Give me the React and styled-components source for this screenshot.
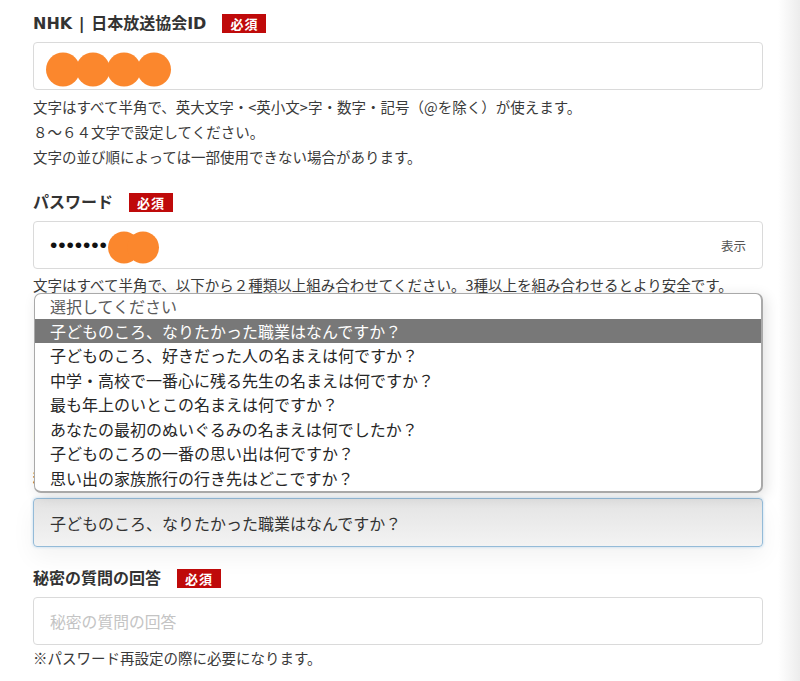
import React from "react";
import styled, { createGlobalStyle } from "styled-components";

const Global = createGlobalStyle`
  html, body { margin: 0; padding: 0; height: 100%; overflow: hidden; background: #fff; }
  body { font-family: "Noto Sans CJK JP", "Noto Sans", sans-serif; color: #333; }
  * { box-sizing: border-box; }
`;

const Page = styled.div`
  display: flex;
  min-height: 681px;
`;

const Main = styled.main`
  width: 778px;
  padding: 13.5px 15px 0 33px;
`;

const Gutter = styled.div`
  flex: 1;
  background: linear-gradient(to right, #ffffff, #ececec);
`;

const Field = styled.section`
  margin-top: ${(p) => p.$gap || 0}px;
  position: relative;
`;

const LabelRow = styled.div`
  display: flex;
  align-items: center;
  gap: 16px;
  height: 19px;
  margin-bottom: 9px;
`;

const Label = styled.span`
  font-family: "DejaVu Sans", "Noto Sans CJK JP", sans-serif;
  font-size: 16px;
  font-weight: 700;
  color: #333;
  line-height: 19px;
  word-spacing: 1px;
`;

const Badge = styled.span`
  display: inline-flex;
  align-items: center;
  justify-content: center;
  width: 44px;
  height: 19px;
  background: #bf0a0a;
  color: #fff;
  font-size: 13px;
  font-weight: 700;
  letter-spacing: 1px;
`;

const InputBox = styled.div`
  height: 48px;
  border: 1px solid #dadada;
  border-radius: 4px;
  background: #fff;
  display: flex;
  align-items: center;
  padding: 0 16px;
  font-size: 16px;
`;

const Placeholder = styled.span`
  color: #c4c4c4;
  font-size: 15.8px;
`;

const Dots = styled.span`
  font-family: "Liberation Sans", sans-serif;
  font-size: 21px;
  letter-spacing: 0.9px;
  color: #111;
  margin-top: -1px;
`;

const Toggle = styled.span`
  margin-left: auto;
  font-size: 12.5px;
  color: #555;
`;

const Help = styled.div`
  margin-top: ${(p) => p.$top || 3}px;
  font-size: 14.5px;
  line-height: ${(p) => p.$lh || 25}px;
  color: #3a3a3a;
  white-space: nowrap;
`;

const SelectBox = styled.div`
  height: 49px;
  border: 1px solid #94bbd8;
  border-radius: 4px;
  background: linear-gradient(#e3e3e3, #f3f3f3);
  box-shadow: 0 0 3px rgba(110, 170, 220, 0.45), 0 10px 24px rgba(0, 0, 0, 0.05);
  display: flex;
  align-items: center;
  padding: 0 16px;
  font-size: 16px;
  color: #333;
`;

const Popup = styled.ul`
  position: absolute;
  left: 1px;
  right: 0;
  bottom: calc(100% + 5px);
  margin: 0;
  padding: 0 0 1px;
  list-style: none;
  background: #fff;
  border: 1px solid #a9a9a9;
  border-right-width: 2px;
  border-bottom-width: 2px;
  border-radius: 7px;
  box-shadow: 3px 3px 14px rgba(0, 0, 0, 0.12);
  overflow: hidden;
  z-index: 5;
`;

const Option = styled.li`
  height: 24.5px;
  line-height: 24.5px;
  padding-left: 15px;
  font-size: 16px;
  white-space: nowrap;
  color: ${(p) => (p.$selected ? "#fff" : p.$muted ? "#5a5a5a" : "#262626")};
  background: ${(p) => (p.$selected ? "#787878" : "transparent")};
`;

const Blob = ({ centers, r, w, h }) => (
  <svg width={w} height={h} viewBox={`0 0 ${w} ${h}`} style={{ display: "block" }}>
    {centers.map((c, i) => (
      <circle key={i} cx={c} cy={h / 2} r={r} fill="#fb872d" />
    ))}
  </svg>
);

const IdBlob = styled.div`
  margin-left: -4px;
  margin-top: 7px;
`;

const PwBlob = styled.div`
  margin-left: -1px;
  margin-top: 5px;
`;

const options = [
  "子どものころ、なりたかった職業はなんですか？",
  "子どものころ、好きだった人の名まえは何ですか？",
  "中学・高校で一番心に残る先生の名まえは何ですか？",
  "最も年上のいとこの名まえは何ですか？",
  "あなたの最初のぬいぐるみの名まえは何でしたか？",
  "子どものころの一番の思い出は何ですか？",
  "思い出の家族旅行の行き先はどこですか？",
];

export default function App() {
  return (
    <>
      <Global />
      <Page>
        <Main>
          <Field>
            <LabelRow>
              <Label>NHK | 日本放送協会ID</Label>
              <Badge>必須</Badge>
            </LabelRow>
            <InputBox>
              <IdBlob>
                <Blob w={126} h={35} r={17} centers={[17, 47, 78, 108]} />
              </IdBlob>
            </InputBox>
            <Help $top={4}>
              文字はすべて半角で、英大文字・&lt;英小文&gt;字・数字・記号（@を除く）が使えます。
              <br />
              ８～６４文字で設定してください。
              <br />
              文字の並び順によっては一部使用できない場合があります。
            </Help>
          </Field>

          <Field $gap={24.5}>
            <LabelRow>
              <Label>パスワード</Label>
              <Badge>必須</Badge>
            </LabelRow>
            <InputBox>
              <Dots>•••••••</Dots>
              <PwBlob>
                <Blob w={53} h={33} r={16} centers={[17, 36]} />
              </PwBlob>
              <Toggle>表示</Toggle>
            </InputBox>
            <Help $top={3}>
              文字はすべて半角で、以下から２種類以上組み合わせてください。3種以上を組み合わせるとより安全です。
              <br />
              ・英大文字（A～Z）
              <br />
              ・英小文字（a～z）
              <br />
              ・数字（0～9）
              <br />
              ・記号
              <br />
              ８～６４文字で設定してください。
              <br />
              NHK ID と同じ文字列は使えません。
            </Help>
          </Field>

          <Field $gap={23}>
            <LabelRow>
              <Label>秘密の質問</Label>
              <Badge>必須</Badge>
            </LabelRow>
            <div style={{ position: "relative" }}>
              <Popup>
                <Option $muted>選択してください</Option>
                {options.map((o, i) => (
                  <Option key={o} $selected={i === 0}>
                    {o}
                  </Option>
                ))}
              </Popup>
              <SelectBox>子どものころ、なりたかった職業はなんですか？</SelectBox>
            </div>
          </Field>

          <Field $gap={22}>
            <LabelRow>
              <Label>秘密の質問の回答</Label>
              <Badge>必須</Badge>
            </LabelRow>
            <InputBox>
              <Placeholder>秘密の質問の回答</Placeholder>
            </InputBox>
            <Help $top={1} $lh={24}>
              ※パスワード再設定の際に必要になります。
            </Help>
          </Field>
        </Main>
        <Gutter />
      </Page>
    </>
  );
}
